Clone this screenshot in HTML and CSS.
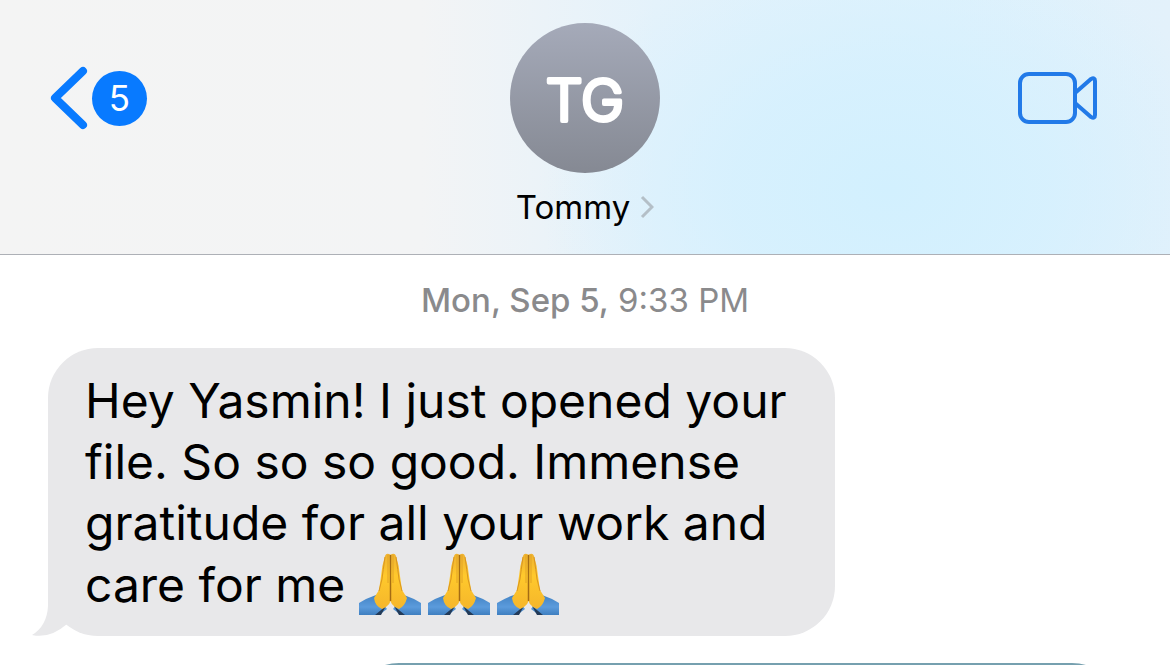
FILE: index.html
```html
<!DOCTYPE html>
<html lang="en">
<head>
    <meta charset="UTF-8">
    <meta name="viewport" content="width=device-width, initial-scale=1.0">
    <title>Messages</title>
    <link rel="stylesheet" href="styles.css">
</head>
<body>
    <header class="header">
        <button type="button" class="back" aria-label="Back, 5 unread">
            <svg class="back-icon" viewBox="0 0 38 64" aria-hidden="true">
                <path d="M33 5L5 32L33 59"/>
            </svg>
            <span class="badge">5</span>
        </button>
        <button type="button" class="contact">
            <svg class="avatar" viewBox="0 0 150 150">
                <defs>
                    <linearGradient id="avatarFill" x1="0" y1="0" x2="0" y2="1">
                        <stop offset="0" stop-color="#a5aab9"/>
                        <stop offset="1" stop-color="#858993"/>
                    </linearGradient>
                </defs>
                <circle cx="75" cy="75" r="75" fill="url(#avatarFill)"/>
                <text x="75" y="98" text-anchor="middle">TG</text>
            </svg>
            <span class="contact-name">
                Tommy
                <svg class="chevron" viewBox="0 0 14 24" aria-hidden="true">
                    <path d="M2 2L12 12L2 22"/>
                </svg>
            </span>
        </button>
        <button type="button" class="video" aria-label="FaceTime video">
            <svg class="video-icon" viewBox="0 0 80 54" aria-hidden="true">
                <rect x="2" y="3" width="55" height="48" rx="9"/>
                <path d="M57 22L73 8Q77 6 77 10V44Q77 48 73 46L57 32"/>
            </svg>
        </button>
    </header>
    <main class="messages">
        <p class="timestamp"><b>Mon, Sep 5,</b> 9:33 PM</p>
        <div class="bubble received">
            <svg width="0" height="0" class="symbols" aria-hidden="true">
                <defs>
                    <linearGradient id="skin" x1="0" y1="0" x2="0" y2="1">
                        <stop offset="0" stop-color="#eeb232"/>
                        <stop offset="0.4" stop-color="#ffc92c"/>
                        <stop offset="1" stop-color="#f5b62b"/>
                    </linearGradient>
                    <linearGradient id="sleeve" x1="0" y1="0" x2="0" y2="1">
                        <stop offset="0" stop-color="#4383c4"/>
                        <stop offset="0.6" stop-color="#5b9bdc"/>
                        <stop offset="1" stop-color="#3f7fc0"/>
                    </linearGradient>
                    <symbol id="hands" viewBox="0 0 62 62">
                        <path d="M0 50Q8 45 17 42L28 56L20 62H0Z" fill="url(#sleeve)"/>
                        <path d="M62 50Q54 45 45 42L34 56L42 62H62Z" fill="url(#sleeve)"/>
                        <path d="M16 62L27 53L22 62ZM46 62L35 53L40 62Z" fill="#233b59"/>
                        <path d="M26 3Q27 0 30 1L32 2V47Q31 51 27 54L23 56Q16 53 15 45L20 37L22 23Q23 12 26 3Z" fill="url(#skin)"/>
                        <path d="M37 3Q36 0 33 1L31 2V47Q32 51 36 54L40 56Q46 53 48 45L43 37L41 23Q40 12 37 3Z" fill="url(#skin)"/>
                        <path d="M26 4Q24 18 23 26L20 38M37 4Q39 18 40 26L43 38" fill="none" stroke="#d99621" stroke-width="1"/>
                        <path d="M29 2V30M34 2V30" fill="none" stroke="#e2a324" stroke-width="1"/>
                        <path d="M31.5 2V48" fill="none" stroke="#a56c14" stroke-width="1.5"/>
                    </symbol>
                </defs>
            </svg>
            Hey Yasmin! I just opened your file. So so so good. Immense gratitude for all your work and care for me
            <span class="emoji" role="img" aria-label="Folded hands, three times">
                <svg viewBox="0 0 62 62"><use href="#hands"/></svg>
                <svg viewBox="0 0 62 62"><use href="#hands"/></svg>
                <svg viewBox="0 0 62 62"><use href="#hands"/></svg>
            </span>
            <svg class="tail" viewBox="0 0 50 50" aria-hidden="true">
                <path d="M16 0V20Q15 40 0 49Q18 53 35 38L50 30V0Z"/>
            </svg>
        </div>
        <div class="bubble sent"></div>
    </main>
</body>
</html>
```
FILE: styles.css
```css
body {
    display: flex;
    flex-direction: column;
    height: 100vh;
    margin: 0;
    overflow: hidden;
    background-color: #fff;
    color: #000;
    font-family: Inter, 'Liberation Sans', sans-serif;
}
button {
    padding: 0;
    border: none;
    background: none;
    color: inherit;
    font-family: inherit;
    cursor: pointer;
}
.header {
    display: grid;
    grid-template-columns: 1fr auto 1fr;
    align-items: start;
    flex-shrink: 0;
    padding: 23px 50px 27px;
    border-bottom: 1px solid #adb0b6;
    background:
        radial-gradient(ellipse 30% 100% at 76% 75%, #d2f0fe 0%, rgba(212, 240, 254, 0.8) 45%, rgba(212, 240, 254, 0) 100%),
        linear-gradient(90deg, #f4f4f4 0%, #f3f4f5 36%, #e4f2fb 56%, #dff2fc 80%, #e3f1fb 100%);
}
.back {
    display: flex;
    align-items: center;
    gap: 4px;
    height: 150px;
    justify-self: start;
}
.back-icon {
    width: 38px;
    height: 64px;
    fill: none;
    stroke: #087aff;
    stroke-width: 8;
    stroke-linecap: round;
    stroke-linejoin: round;
}
.badge {
    width: 55px;
    border-radius: 50%;
    background-color: #087aff;
    color: #fff;
    font-size: 35px;
    line-height: 55px;
    text-align: center;
}
.contact {
    display: flex;
    flex-direction: column;
    align-items: center;
    gap: 14px;
}
.avatar {
    width: 150px;
    height: 150px;
}
.avatar text {
    fill: #fff;
    stroke: #fff;
    stroke-width: 4;
    stroke-linejoin: round;
    font-size: 58px;
    font-weight: 300;
}
.contact-name {
    display: flex;
    align-items: center;
    gap: 10px;
    font-size: 33px;
    line-height: 40px;
}
.chevron {
    width: 14px;
    height: 24px;
    fill: none;
    stroke: #b4bfc7;
    stroke-width: 3;
}
.video {
    display: flex;
    align-items: center;
    height: 150px;
    margin-right: 22px;
    justify-self: end;
}
.video-icon {
    width: 80px;
    height: 54px;
    fill: none;
    stroke: #227ae8;
    stroke-width: 4;
}
.messages {
    display: flex;
    flex: 1;
    flex-direction: column;
    min-height: 0;
    padding: 25px 48px 0;
    overflow: hidden;
}
.timestamp {
    margin: 0 0 28px;
    color: #8a8a8c;
    font-size: 33px;
    line-height: 40px;
    text-align: center;
}
.timestamp b {
    font-weight: 500;
}
.bubble {
    box-sizing: border-box;
    flex-shrink: 0;
    width: 74%;
    max-width: 787px;
    border-radius: 50px;
}
.received {
    position: relative;
    padding: 22px 30px 21px 37px;
    background-color: #e8e8ea;
    font-size: 48px;
    line-height: 61px;
}
.symbols {
    position: absolute;
}
.emoji {
    display: inline-flex;
    gap: 7px;
    height: 61px;
    vertical-align: -13px;
}
.emoji svg {
    width: 62px;
    height: 62px;
}
.tail {
    position: absolute;
    left: -16px;
    bottom: 0;
    width: 50px;
    height: 50px;
    fill: #e8e8ea;
}
.sent {
    align-self: flex-end;
    width: 72%;
    height: 130px;
    margin-top: 27px;
    background-color: #76a0af;
}
```
